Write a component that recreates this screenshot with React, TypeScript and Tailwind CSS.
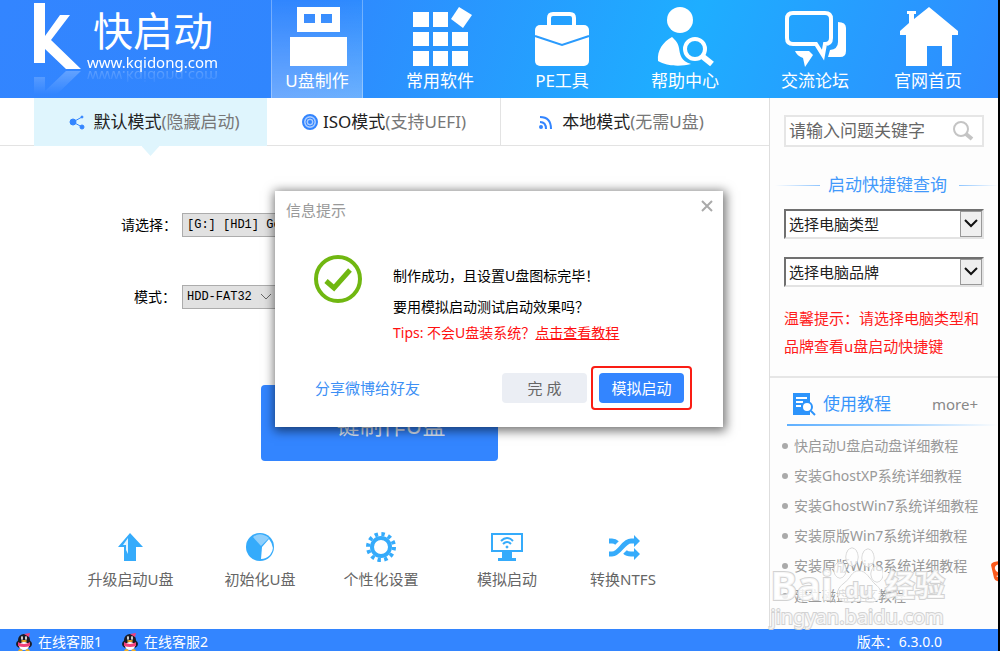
import type { ReactNode } from "react";

const navItems = [
  { label: "U盘制作", icon: <UsbIcon />, active: true },
  { label: "常用软件", icon: <AppsIcon /> },
  { label: "PE工具", icon: <BriefcaseIcon /> },
  { label: "帮助中心", icon: <HelpIcon /> },
  { label: "交流论坛", icon: <ForumIcon /> },
  { label: "官网首页", icon: <HouseIcon /> },
];

const tools = [
  { label: "升级启动U盘", icon: <UpgradeIcon /> },
  { label: "初始化U盘", icon: <PieIcon /> },
  { label: "个性化设置", icon: <GearIcon /> },
  { label: "模拟启动", icon: <MonitorIcon /> },
  { label: "转换NTFS", icon: <ShuffleIcon /> },
];

const tutorials = [
  "快启动U盘启动盘详细教程",
  "安装GhostXP系统详细教程",
  "安装GhostWin7系统详细教程",
  "安装原版Win7系统详细教程",
  "安装原版Win8系统详细教程",
  "建立磁盘分区教程",
];

function UsbIcon() {
  return (
    <svg viewBox="0 0 64 64" className="size-16" fill="#fff">
      <path fillRule="evenodd" d="M12 3H55V28H12ZM19 10V19H30V10ZM36 10V19H47V10Z" />
      <path d="M5 33H62V62H5Z" />
    </svg>
  );
}

function AppsIcon() {
  return (
    <svg viewBox="0 0 64 64" className="size-16" fill="#fff">
      <path d="M5 8H21V23H5ZM25 8H40V23H25ZM5 28H21V42H5ZM25 28H40V42H25ZM44 28H60V42H44ZM5 47H21V62H5ZM25 47H40V62H25ZM44 47H60V62H44Z" />
      <path d="M51 3L64 11L55 24L43 15Z" />
    </svg>
  );
}

function BriefcaseIcon() {
  return (
    <svg viewBox="0 0 64 64" className="size-16">
      <rect x="5" y="21" width="54" height="41" rx="5" fill="#fff" />
      <path d="M19 22V14Q19 10 23 10H40Q44 10 44 14V22" fill="none" stroke="#fff" strokeWidth="4" />
      <path d="M5 32L32 41L59 32" fill="none" stroke="#2a9bfd" strokeWidth="2" />
    </svg>
  );
}

function HelpIcon() {
  return (
    <svg viewBox="0 0 64 64" className="size-16">
      <circle cx="27" cy="16" r="13" fill="#fff" />
      <path d="M19 33C10 38 4 46 5 57C13 62 27 63 38 60C28 57 27 51 26 44C25 38 22 36 19 33Z" fill="#fff" />
      <circle cx="42" cy="45" r="10" fill="none" stroke="#fff" strokeWidth="4" />
      <path d="M49 52L59 60" stroke="#fff" strokeWidth="6" />
    </svg>
  );
}

function ForumIcon() {
  return (
    <svg viewBox="0 0 64 64" className="size-16">
      <path
        d="M10 9H42Q48 9 48 15V34Q48 40 42 40L40 51L33 40H10Q4 40 4 34V15Q4 9 10 9Z"
        fill="none"
        stroke="#fff"
        strokeWidth="4"
      />
      <path d="M55 18Q63 18 63 24V47Q63 53 57 53H45L47 46Q55 45 55 38Z" fill="#fff" />
      <path d="M12 47H26L30 51L22 63L20 54Q14 52 12 47Z" fill="#fff" />
    </svg>
  );
}

function HouseIcon() {
  return (
    <svg viewBox="0 0 64 64" className="size-16" fill="#fff">
      <path d="M33 3L62 27V31H56V62H46V42H31V62H10V31H4V27L13 19V10H11V7H20V10H18V15Z" />
    </svg>
  );
}

function UpgradeIcon() {
  return (
    <svg viewBox="0 0 32 32" className="size-8">
      <path d="M15 2L28 16H21V30H9V16H3Z" fill="#35abfb" />
      <path d="M13 7V23L11 19V14H8Z" fill="#e2f4ff" />
    </svg>
  );
}

function PieIcon() {
  return (
    <svg viewBox="0 0 32 32" className="size-8">
      <circle cx="16" cy="16" r="14" fill="#35abfb" />
      <path d="M17 15L9 6Q16 0 25 7Z" fill="#8fcffc" />
      <path d="M18 16L25 8Q32 17 26 24Q22 28 17 28Z" fill="#fff" />
    </svg>
  );
}

function GearIcon() {
  return (
    <svg viewBox="0 0 32 32" className="size-8" fill="none" stroke="#35abfb">
      <circle cx="16" cy="16" r="13" strokeWidth="4" strokeDasharray="3.4 3.407" />
      <circle cx="16" cy="16" r="9" strokeWidth="4" />
    </svg>
  );
}

function MonitorIcon() {
  return (
    <svg viewBox="0 0 34 32" className="h-8 w-[34px]" fill="none" stroke="#35abfb">
      <path d="M2 3H32V20H2Z" strokeWidth="2" />
      <path d="M12 21H22V27H26V30H8V27H12Z" fill="#35abfb" stroke="none" />
      <path d="M11 10Q17 4 23 10M13 13Q17 9 21 13" strokeWidth="2" />
      <circle cx="17" cy="16" r="1" fill="#35abfb" />
    </svg>
  );
}

function ShuffleIcon() {
  return (
    <svg viewBox="0 0 34 32" className="h-8 w-[34px]" fill="none" stroke="#35abfb" strokeWidth="5">
      <path d="M3 23H6C14 23 17 10 25 10H28M3 10H6Q9 10 11 12M19 21Q21 23 25 23H28" />
      <path d="M28 4L34 10L28 16ZM28 17L34 23L28 29Z" fill="#35abfb" stroke="none" />
    </svg>
  );
}

function PenguinIcon() {
  return (
    <svg viewBox="0 0 18 18" className="size-[18px]">
      <ellipse cx="9" cy="11" rx="8" ry="5" fill="#1b1b24" />
      <ellipse cx="9" cy="7" rx="6" ry="6" fill="#1b1b24" />
      <ellipse cx="9" cy="13" rx="5" ry="4" fill="#fff" />
      <ellipse cx="7" cy="5" rx="1" ry="2" fill="#ddd" />
      <ellipse cx="11" cy="5" rx="1" ry="2" fill="#ddd" />
      <ellipse cx="9" cy="8" rx="3" ry="1" fill="#f5b021" />
      <path d="M3 9Q9 13 15 9V13Q9 15 3 13Z" fill="#f0407a" />
      <path d="M9 1L15 0L14 4Z" fill="#f0407a" />
      <path d="M3 18Q5 14 8 18ZM10 18Q13 14 15 18Z" fill="#f5b021" />
    </svg>
  );
}

function Logo() {
  return (
    <div className="flex items-start pl-[33px] text-white">
      <svg
        viewBox="0 0 48 70"
        className="h-[70px] w-12 shrink-0 [-webkit-box-reflect:below_0px_linear-gradient(transparent_65%,rgba(255,255,255,0.25))]"
        fill="#fff"
      >
        <path d="M1 3H12V36L27 15H37L18 40L48 69H33L12 49V63H1Z" />
      </svg>
      <div className="pt-2 pl-[6px]">
        <div className="pl-[6px] text-[40px] leading-[46px]">快启动</div>
        <div className="text-[15px] leading-4 [-webkit-box-reflect:below_-1px_linear-gradient(transparent,rgba(255,255,255,0.25))]">
          www.kqidong.com
        </div>
      </div>
    </div>
  );
}

function ModeTab({
  icon,
  name,
  note,
  active = false,
}: {
  icon: ReactNode;
  name: string;
  note: string;
  active?: boolean;
}) {
  return (
    <button
      type="button"
      className={
        active
          ? "relative flex h-12 items-center justify-center gap-2 bg-[#dff5fd] pl-2"
          : "flex h-12 items-center justify-center gap-1 border-r border-b border-[#e3e3e3]"
      }
    >
      {icon}
      <span className="text-[17px] whitespace-nowrap text-[#777]">
        <span className="text-[#222]">{name}</span>({note})
      </span>
      {active && (
        <span className="absolute top-full left-1/2 h-[10px] w-[18px] -translate-x-1/2 bg-[#dff5fd] [clip-path:polygon(0_0,100%_0,50%_100%)]" />
      )}
    </button>
  );
}

function SideSelect({ label }: { label: string }) {
  return (
    <div className="relative">
      <select
        aria-label={label}
        className="block h-[30px] w-full appearance-none border-2 border-[#e3e3e3] border-t-[#707070] border-l-[#707070] bg-white pl-[3px] text-[15px] text-[#222]"
      >
        <option>{label}</option>
      </select>
      <span className="pointer-events-none absolute top-[2px] right-[2px] flex h-[26px] w-[22px] items-center justify-center border border-[#999] bg-[#efefef]">
        <svg viewBox="0 0 14 10" className="h-[10px] w-[14px]">
          <path d="M1 1L7 7L13 1" fill="none" stroke="#111" strokeWidth="2" />
        </svg>
      </span>
    </div>
  );
}

function Dialog() {
  return (
    <div
      role="dialog"
      aria-labelledby="dialog-title"
      className="absolute top-[191px] left-1/2 z-10 h-[236px] w-[448px] -translate-x-1/2 bg-white shadow-[1px_2px_10px_2px_rgba(0,0,0,0.55)]"
    >
      <div className="flex items-start justify-between pt-[9px] pr-[10px] pl-[11px]">
        <h2 id="dialog-title" className="text-[15px] leading-5 text-[#999]">
          信息提示
        </h2>
        <button type="button" aria-label="关闭">
          <svg viewBox="0 0 12 12" className="size-3">
            <path d="M1 1L11 11M11 1L1 11" stroke="#aaa" strokeWidth="2" />
          </svg>
        </button>
      </div>
      <div className="flex gap-[30px] pt-[35px] pl-[39px]">
        <svg viewBox="0 0 49 49" className="size-[49px]" fill="none" stroke="#70b711">
          <circle cx="24" cy="24" r="22" strokeWidth="4" />
          <path d="M12 26L20 33L36 15" strokeWidth="5" />
        </svg>
        <div className="pt-2 text-sm whitespace-nowrap text-black">
          <p className="pb-[5px] leading-[26px]">制作成功，且设置U盘图标完毕！</p>
          <p className="leading-[26px]">要用模拟启动测试启动效果吗？</p>
          <p className="leading-[26px] text-[#ff1010]">
            Tips: 不会U盘装系统？
            <a href="#tutorial" className="underline">
              点击查看教程
            </a>
          </p>
        </div>
      </div>
      <div className="flex items-center justify-between pt-[20px] pr-[31px] pl-10 text-[15px]">
        <a href="#share" className="text-[#3c8ff5]">
          分享微博给好友
        </a>
        <div className="flex items-center gap-1">
          <button type="button" className="h-[30px] w-[85px] rounded-sm bg-[#ebeef4] text-[#666]">
            完 成
          </button>
          <div className="flex h-11 w-[101px] items-center justify-center rounded border-2 border-[#fa1d14]">
            <button type="button" className="h-[30px] w-[85px] rounded-sm bg-[#3385ff] text-white">
              模拟启动
            </button>
          </div>
        </div>
      </div>
    </div>
  );
}

function Watermark() {
  return (
    <div className="pointer-events-none absolute right-[53px] bottom-[22px] z-10 whitespace-nowrap text-white/80 [-webkit-text-stroke:2px_#d2d2d2] [paint-order:stroke_fill]">
      <div className="flex items-end font-bold">
        <span className="text-[40px] leading-10">Bai</span>
        <span className="relative flex w-[52px] justify-center">
          <svg
            viewBox="0 0 50 60"
            className="absolute bottom-0 left-0 h-[60px] w-[50px]"
            fill="#fff"
            fillOpacity="0.65"
            stroke="#c8c8c8"
          >
            <ellipse cx="19" cy="12" rx="6" ry="9" />
            <ellipse cx="35" cy="13" rx="6" ry="9" />
            <ellipse cx="7" cy="25" rx="6" ry="8" />
            <ellipse cx="44" cy="29" rx="6" ry="8" />
            <path d="M26 26C18 26 18 34 10 39C1 46 4 58 15 57Q26 55 36 57C49 58 51 46 43 40C36 34 34 26 26 26Z" />
          </svg>
          <span className="relative text-[22px] leading-8">du</span>
        </span>
        <span className="text-[30px] leading-10">经验</span>
      </div>
      <div className="text-xl leading-6">jingyan.baidu.com</div>
    </div>
  );
}

export default function App() {
  return (
    <div className='relative flex min-h-screen flex-col overflow-hidden border-r-2 border-black bg-white font-["Noto_Sans","Noto_Sans_CJK_SC",sans-serif]'>
      <header className="grid h-[98px] grid-cols-[271fr_92fr_154fr_90fr_156fr_104fr_122fr_9fr] overflow-hidden bg-[linear-gradient(110deg,#3385ff_0%,#3086fe_30%,#1eaeff_68%,#2f8bff_100%)]">
        <Logo />
        {navItems.map((item) => (
          <button
            key={item.label}
            type="button"
            className={
              item.active
                ? "flex flex-col items-center border-x border-white/30 bg-linear-to-b from-transparent to-white/30 pt-1 text-white"
                : "flex flex-col items-center pt-1 text-white"
            }
          >
            {item.icon}
            <span className="text-[17px] leading-[26px] whitespace-nowrap">{item.label}</span>
          </button>
        ))}
      </header>

      <div className="flex flex-1">
        <main className="flex min-w-0 flex-1 flex-col">
          <div className="grid grid-cols-[34fr_233fr_234fr_240fr_28fr]">
            <span className="border-b border-[#e3e3e3]" />
            <ModeTab
              active
              name="默认模式"
              note="隐藏启动"
              icon={
                <svg viewBox="0 0 16 16" className="size-4" fill="#3385ff" stroke="#3385ff">
                  <path d="M13 3L4 8L13 13" fill="none" />
                  <circle cx="4" cy="8" r="3" />
                  <circle cx="13" cy="3" r="1" />
                  <circle cx="13" cy="13" r="2" />
                </svg>
              }
            />
            <ModeTab
              name="ISO模式"
              note="支持UEFI"
              icon={
                <svg viewBox="0 0 18 18" className="size-[18px]" fill="#a8cbff" stroke="#3385ff">
                  <circle cx="9" cy="9" r="7" strokeWidth="2" />
                  <circle cx="9" cy="9" r="4" />
                  <circle cx="9" cy="9" r="1" strokeWidth="2" />
                </svg>
              }
            />
            <button
              type="button"
              className="flex h-12 items-center justify-center gap-2 border-b border-[#e3e3e3]"
            >
              <svg viewBox="0 0 16 16" className="size-4" fill="none" stroke="#3385ff" strokeWidth="2">
                <path d="M2 3Q13 3 13 15M2 8Q8 8 8 15" />
                <circle cx="3" cy="13" r="1" />
              </svg>
              <span className="text-[17px] whitespace-nowrap text-[#777]">
                <span className="text-[#222]">本地模式</span>(无需U盘)
              </span>
            </button>
            <span className="border-b border-[#e3e3e3]" />
          </div>

          <form className="pt-[67px] pl-[121px] text-sm text-black">
            <div className="flex items-center">
              <label htmlFor="disk" className="w-[61px]">
                请选择：
              </label>
              <select
                id="disk"
                className='h-6 w-[400px] appearance-none border border-[#acacac] bg-[#e1e1e1] pl-1 font-["Liberation_Mono",monospace] text-xs'
              >
                <option>[G:] [HD1] General UDisk</option>
              </select>
            </div>
            <div className="flex items-center pt-12">
              <label htmlFor="mode" className="w-[61px] pl-[13px]">
                模式：
              </label>
              <div className="relative">
                <select
                  id="mode"
                  className='block h-6 w-[98px] appearance-none border border-[#acacac] bg-[#e1e1e1] pl-1 font-["Liberation_Mono",monospace] text-xs'
                >
                  <option>HDD-FAT32</option>
                </select>
                <svg viewBox="0 0 12 8" className="pointer-events-none absolute top-2 left-[78px] h-2 w-3">
                  <path d="M1 1L6 6L11 1" fill="none" stroke="#666" />
                </svg>
              </div>
            </div>
          </form>

          <div className="flex justify-center pt-[76px] pr-[10px]">
            <button
              type="button"
              className="h-[76px] w-[237px] rounded-sm bg-[#3385ff] pt-1 text-[23px] text-[#dbe6f6]"
            >
              一键制作U盘
            </button>
          </div>

          <div className="grid grid-cols-[65fr_131fr_128fr_114fr_138fr_94fr_99fr] pt-[70px]">
            <span />
            {tools.map((tool) => (
              <button
                key={tool.label}
                type="button"
                className="flex flex-col items-center gap-1 text-[15px] leading-6 whitespace-nowrap text-[#666]"
              >
                {tool.icon}
                {tool.label}
              </button>
            ))}
          </div>
        </main>

        <aside className="w-[229px] shrink-0 border-l border-[#dedede] bg-[#fdfdfd]">
          <div className="px-[14px] pt-[17px]">
            <div className="flex h-8 items-center border-2 border-[#e6e6e6] bg-white pr-2 pl-[3px]">
              <input
                type="text"
                aria-label="搜索"
                placeholder="请输入问题关键字"
                className="w-0 flex-1 text-[17px] placeholder:text-[#666]"
              />
              <button type="button" aria-label="搜索问题">
                <svg viewBox="0 0 24 24" className="size-6" fill="none" stroke="#c4c4c4">
                  <circle cx="11" cy="10" r="7" strokeWidth="2" />
                  <path d="M16 15L22 20" strokeWidth="4" />
                </svg>
              </button>
            </div>
          </div>
          <div className="flex items-center gap-2 pt-[26px] pl-[5px]">
            <span className="h-px w-[45px] bg-linear-to-r from-transparent to-[#8ec5ff]" />
            <h2 className="text-[17px] leading-6 text-[#4299fb]">启动快捷键查询</h2>
            <span className="ml-1 h-px flex-1 bg-linear-to-r from-[#8ec5ff] to-transparent" />
          </div>
          <div className="flex flex-col gap-[18px] px-[14px] pt-3">
            <SideSelect label="选择电脑类型" />
            <SideSelect label="选择电脑品牌" />
          </div>
          <p className="pt-[17px] pl-[14px] text-[15px] leading-7 text-[#ff1a1a]">
            温馨提示：请选择电脑类型和
            <br />
            品牌查看u盘启动快捷键
          </p>
          <div className="mt-4 border-t-2 border-[#e6e6e6] pl-[17px]">
            <div className="flex items-center pt-[14px] pr-5 pb-2 pl-[5px]">
              <svg viewBox="0 0 24 24" className="size-6">
                <path d="M1 1H18V23H1Z" fill="#2d94fb" />
                <path d="M4 6H15M4 10H11M4 14H9" stroke="#fff" strokeWidth="2" />
                <circle cx="15" cy="15" r="5" fill="#fff" stroke="#2d94fb" strokeWidth="2" />
                <path d="M19 19L23 23" stroke="#2d94fb" strokeWidth="2" />
              </svg>
              <h2 className="flex-1 pl-[7px] text-[17px] leading-6 text-[#3795fb]">使用教程</h2>
              <a href="#more" className="text-[15px] leading-6 text-[#888]">
                more+
              </a>
            </div>
            <div className="h-[2px] bg-linear-to-r from-[#5fb0ff] via-[#9bcfff] to-transparent" />
          </div>
          <ul className="pt-[5px] pl-3 text-sm leading-[30px] text-[#999]">
            {tutorials.map((title) => (
              <li key={title} className="flex items-center gap-[6px] whitespace-nowrap">
                <span className="size-[6px] rounded-full bg-[#aaa]" />
                <a href="#tutorial">{title}</a>
              </li>
            ))}
          </ul>
        </aside>
      </div>

      <footer className="flex h-[22px] items-start justify-between overflow-hidden bg-[#3385ff] pt-1 pr-[56px] pl-[15px] text-sm leading-[18px] text-white">
        <div className="flex gap-[19px]">
          <a href="#service1" className="flex gap-[5px]">
            <PenguinIcon />
            在线客服1
          </a>
          <a href="#service2" className="flex gap-[5px]">
            <PenguinIcon />
            在线客服2
          </a>
        </div>
        <span>版本：6.3.0.0</span>
      </footer>

      <Dialog />
      <Watermark />
      <svg viewBox="0 0 10 22" className="absolute -right-[2px] bottom-[69px] z-10 h-[22px] w-[10px]">
        <path d="M1 5Q1 3 4 2L10 1V22L7 21Q5 21 4 18Z" fill="#fb5a1c" />
        <path d="M10 4Q4 5 5 9Q6 13 10 12ZM6 16L10 15V18Z" fill="#fff" />
      </svg>
    </div>
  );
}
